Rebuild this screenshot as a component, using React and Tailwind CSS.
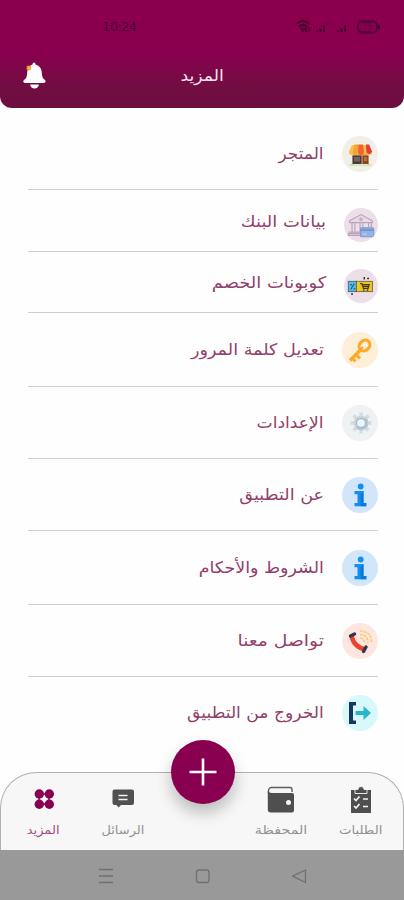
import React from 'react';

const StoreIcon = () => (
  <svg viewBox="0 0 36 36" className="w-full h-full">
    <rect x="10.500" y="17" width="16" height="11" fill="#e9a45c" />
    <rect x="10.500" y="19.500" width="9" height="8.500" fill="#4b3a3c" />
    <rect x="12" y="21" width="6" height="4.500" fill="#6f6467" />
    <rect x="20.500" y="19.500" width="6" height="8.500" fill="#85492a" />
    <rect x="22" y="21" width="3" height="4" fill="#b4703f" />
    <path d="M10 9h17l3 6.500a3 3 0 0 1-6 1 3 3 0 0 1-5.500 0 3 3 0 0 1-5.500 0 3 3 0 0 1-6-1z" fill="#fbc04b" />
    <path d="M12.500 8.500h4l-.5 7a3 3 0 0 1-5.500 1.500z" fill="#f8a03b" />
    <path d="M16.500 8.500h4.500l1 7.500a3 3 0 0 1-6 0z" fill="#f0642f" />
    <path d="M24 8.500h3l3 7a3 3 0 0 1-5.500 1z" fill="#e23c3c" />
    <path d="M7 29.500q3-2.500 5-.8h13q2-1.800 5 .8z" fill="#b7dd79" />
  </svg>
);

const BankIcon = () => (
  <svg viewBox="0 0 36 36" className="w-full h-full" fill="none" stroke="#b7a3ba" strokeWidth="1.200">
    <path d="M6 13.500 18 7l12 6.500v2H6z" fill="#ead9e5" />
    <path d="M8.500 16v9M11.500 16v9M17 16v9M20 16v9M26 16v4M29 16v4" />
    <path d="M5 25.500h14M4 29h15v-2H5z" fill="#e2cbdc" />
    <circle cx="18" cy="12" r="1.300" />
    <rect x="17.500" y="21" width="14" height="9.500" rx="1" fill="#94b4e6" stroke="#7e9dd6" />
    <path d="M17.500 23.500h14" stroke="#7592c9" strokeWidth="1.800" />
    <path d="M20 27.500h4" stroke="#c5d8f5" />
  </svg>
);

const CouponIcon = () => (
  <svg viewBox="0 0 36 36" className="w-full h-full">
    <rect x="4.500" y="13" width="9" height="11" fill="#57bce9" stroke="#30556b" strokeWidth=".8" />
    <rect x="13" y="13" width="17" height="11" fill="#efc719" stroke="#57512f" strokeWidth=".8" />
    <path d="m7 21.500 4-6M6.500 16.500h2M10 21h2" stroke="#276388" strokeWidth="1.300" />
    <path d="M17 15.500h2l1.500 5h5l1.200-4H19.500M20 18.500h6" fill="none" stroke="#463b25" strokeWidth="1.300" />
    <circle cx="21" cy="22.300" r=".9" fill="#463b25" />
    <circle cx="25" cy="22.300" r=".9" fill="#463b25" />
    <path d="M15 13v11" stroke="#f7e48f" strokeWidth=".6" strokeDasharray="1 1" />
    <path d="M21.500 8.500v2.500M24.500 10h2M8.500 25.500v2" stroke="#2f2a31" strokeWidth="1.500" />
  </svg>
);

const KeyIcon = () => (
  <svg viewBox="0 0 36 36" className="w-full h-full" fill="none" stroke="#fbab27">
    <ellipse cx="22.500" cy="13.500" rx="5.800" ry="4.800" transform="rotate(-45 22.500 13.500)" strokeWidth="3.200" />
    <path d="M18.500 18 8 28.500" strokeWidth="3.600" />
    <path d="m14 22.500 4 4M10 26l3.500 3.500" strokeWidth="3" />
    <path d="m19 17 2-2" stroke="#f18f1c" strokeWidth="1.500" />
  </svg>
);

const GearIcon = () => (
  <svg viewBox="0 0 36 36" className="w-full h-full">
    <g transform="translate(19 18)">
      <g stroke="#d3dce2" strokeWidth="3.500">
        <path d="M0-10.500v21M-10.500 0h21" />
        <path d="m-7.500-7.500 15 15M7.500-7.500l-15 15" />
      </g>
      <circle r="7.300" fill="#c9d5dc" />
      <path d="M5.200-5.200A7.300 7.300 0 0 1-5.200 5.200z" fill="#b8c6d0" />
      <circle r="4.500" fill="#edf6fc" stroke="#a3bac8" strokeWidth="1.300" />
    </g>
  </svg>
);

const InfoIcon = () => (
  <svg viewBox="0 0 36 36" className="w-full h-full" fill="#168df0">
    <circle cx="18.700" cy="9.500" r="2.900" />
    <path d="M12.500 14h9v12h2.800v3.200H12.500V26h3v-8.700h-3z" />
    <path d="M18.500 17v12.200h5.800V26h-2.800V14z" fill="#0b78df" />
  </svg>
);

const PhoneIcon = () => (
  <svg viewBox="0 0 36 36" className="w-full h-full" fill="none">
    <path d="M9.500 12.500q2 11.500 14 14" stroke="#ed432b" strokeWidth="4.500" />
    <path d="M8.500 13 12.500 11M21.500 28.500l2.500-4.500" stroke="#33394c" strokeWidth="3.400" strokeLinecap="round" />
    <path d="M18 15q4 0 4.500 4.500M18 11.500q7.500 0 8 8M18 8q11 0 11.500 11" stroke="#f6cf72" strokeWidth="1.600" strokeDasharray="3 .8" />
  </svg>
);

const ExitIcon = () => (
  <svg viewBox="0 0 36 36" className="w-full h-full">
    <path d="M14 7H7v22h7v-3.500h-3v-15h3z" fill="#153763" />
    <path d="M13.500 16h8v-5l7.500 7-7.500 7v-5h-8z" fill="#27b9cb" />
  </svg>
);

// Rows are not equally tall, so each one carries its own height and label width.
const items = [
  { label: 'المتجر', icon: StoreIcon, row: 'h-[72px]', badge: 'w-9 h-9 bg-[#f2efe8]', text: 'scale-x-[1.06]' },
  { label: 'بيانات البنك', icon: BankIcon, row: 'h-[62px]', badge: 'w-[34px] h-[34px] bg-[#eddfe9] mt-2', text: 'mt-0.5 scale-x-[1.12]' },
  { label: 'كوبونات الخصم', icon: CouponIcon, row: 'h-[61px]', badge: 'w-[34px] h-[34px] bg-[#eddfe9] mt-2', text: 'mt-0.5 scale-x-[1.12]' },
  { label: 'تعديل كلمة المرور', icon: KeyIcon, row: 'h-[74px]', badge: 'w-9 h-9 bg-[#ffeed8]', text: 'scale-x-[1.1]' },
  { label: 'الإعدادات', icon: GearIcon, row: 'h-[72px]', badge: 'w-9 h-9 bg-[#eef2f3]', text: 'scale-x-[1.07]' },
  { label: 'عن التطبيق', icon: InfoIcon, row: 'h-[72px]', badge: 'w-9 h-9 bg-[#d2e6fb]', text: 'scale-x-[1.1]' },
  { label: 'الشروط والأحكام', icon: InfoIcon, row: 'h-[74px]', badge: 'w-9 h-9 bg-[#d2e6fb]', text: 'scale-x-[1.09]' },
  { label: 'تواصل معنا', icon: PhoneIcon, row: 'h-[72px]', badge: 'w-9 h-9 bg-[#ffe6e1]', text: 'scale-x-[1.17]' },
  { label: 'الخروج من التطبيق', icon: ExitIcon, row: 'h-[72px]', badge: 'w-9 h-9 bg-[#d9f8fb]', text: 'scale-x-[1.07]' },
];

const ListIcon = () => (
  <svg viewBox="0 0 28 28" className="w-7 h-7">
    <path d="M4 4h20v23H4z" fill="#4f4f4f" />
    <path d="M8 3.500h3a3 3 0 0 1 6 0h3v4H8z" fill="#4f4f4f" stroke="#f5f5f5" strokeWidth=".9" />
    <path d="m7 12.500 2 2 3.500-4M7 20l2 2 3.500-4M16 13h5M16 20.500h5" fill="none" stroke="#f5f5f5" strokeWidth="1.700" />
  </svg>
);

const WalletIcon = () => (
  <svg viewBox="0 0 28 28" className="w-7 h-7">
    <path d="M1.500 8V4.500a3 3 0 0 1 3-3h18.500a2 2 0 0 1 2 2V6" fill="none" stroke="#5b5b5b" strokeWidth="1.400" />
    <path d="M.8 5q1.500 2 4 2H25a2 2 0 0 1 2 2v15.500a2 2 0 0 1-2 2H3.800a3 3 0 0 1-3-3z" fill="#4f4f4f" />
    <circle cx="21.500" cy="16.500" r="2.500" fill="#f7f7f7" />
  </svg>
);

const MessageIcon = () => (
  <svg viewBox="0 0 28 28" className="w-7 h-7">
    <path d="M5.500 3.500h17.500a2 2 0 0 1 2 2V17a2 2 0 0 1-2 2H12l-2.500 2.500L7.500 19h-2a2 2 0 0 1-2-2V5.500a2 2 0 0 1 2-2z" fill="#515151" />
    <path d="M9.500 9.500h9M9.500 13.500h9" stroke="#f5f5f5" strokeWidth="1.500" />
  </svg>
);

const MoreIcon = () => (
  <svg viewBox="0 0 28 28" className="w-7 h-7" fill="#8a0051">
    <path d="M9 8h10v10H9z" fill="none" stroke="#8a0051" strokeWidth="1.500" />
    <circle cx="9.300" cy="8" r="4.700" />
    <circle cx="19.300" cy="8" r="4.700" />
    <circle cx="9.300" cy="18.200" r="4.700" />
    <circle cx="19.300" cy="18.200" r="4.700" />
  </svg>
);

function StatusIcons() {
  return (
    <svg viewBox="0 0 86 16" className="w-[86px] h-4" fill="none" stroke="#4c002f">
      <path d="M1 4.500q6-5 12 0M3 7.500q4-3 8 0" strokeWidth="2.200" />
      <path d="m7 12-2-2.500h4zM10 8v5M13 13V8" strokeWidth="1.500" />
      <path d="M21 13v-2M24.500 13V9.500M28 13V6M42 13v-2M45.500 13V9.500M49 13V6" strokeWidth="2" />
      <path d="M30 5h2" strokeWidth="1" />
      <rect x="62" y="2.500" width="19" height="11" rx="4" strokeWidth="1.800" />
      <path d="M83 6v4" strokeWidth="2" />
      <text x="66" y="11" fontSize="8" fill="#63063f" stroke="none">39</text>
    </svg>
  );
}

function Header() {
  return (
    <header className="h-[108px] rounded-b-xl bg-[linear-gradient(to_bottom,#8a004f_0%,#8a004f_48%,#720d42_80%,#6c0e40_100%)]">
      <div className="flex h-[54px] items-center justify-between pl-[102px] pr-[22px]">
        <span className="text-[13px] leading-4 text-[#4c002f] tracking-[-0.6px]">10:24</span>
        <StatusIcons />
      </div>
      <div className="grid h-[43px] grid-cols-[68px_1fr_68px] items-center">
        <svg viewBox="0 0 28 32" className="w-7 h-8 ml-5 -mt-0.5" fill="#fff">
          <path d="M14 3.500q1.500 0 1.500 2Q22 7 22 16q0 3 3 5 1.500 2-1 3H5q-3-1-1-3 3-2 3-5 0-9 5.500-10.500 0-2 1.500-2z" />
          <path d="M10 25.500h9q-1 4-4.500 4t-4.500-4z" />
          <circle cx="8.800" cy="9" r="2.400" fill="#ef9a25" />
          <circle cx="9" cy="9.200" r=".9" fill="#f6ca78" />
        </svg>
        <h1 className="justify-self-center text-base leading-5 text-[#f3e2ec]">
          <span className="inline-block scale-x-[1.08]">المزيد</span>
        </h1>
      </div>
    </header>
  );
}

function Tab({ icon: Icon, label, className, text }) {
  return (
    <button className={`flex w-[79px] flex-col items-center pt-[13px] ${className}`}>
      <Icon />
      <span className={`mt-2 inline-block whitespace-nowrap text-[12px] leading-4 ${text}`}>{label}</span>
    </button>
  );
}

function BottomBar() {
  return (
    <nav dir="rtl" className="relative flex h-[78px] justify-between rounded-t-[36px] border border-b-0 border-[#b0b0b0] bg-[#f7f7f7] px-[3px]">
      <Tab icon={ListIcon} label="الطلبات" className="text-[#929292]" text="scale-x-[1.1]" />
      <Tab icon={WalletIcon} label="المحفظة" className="text-[#929292]" text="scale-x-[1.19]" />
      <div className="w-[79px]" />
      <Tab icon={MessageIcon} label="الرسائل" className="text-[#929292]" text="scale-x-[1.08]" />
      <Tab icon={MoreIcon} label="المزيد" className="text-[#a94a80]" text="scale-x-[1.09]" />
      <button className="absolute -top-[33px] left-[170px] flex h-16 w-16 items-center justify-center rounded-full bg-[#8a0051] shadow-[0_9px_16px_rgba(0,0,0,0.24)]">
        <svg viewBox="0 0 28 28" className="w-7 h-7" stroke="#fff" strokeWidth="2.600">
          <path d="M14 .5v27M.5 14h27" />
        </svg>
      </button>
    </nav>
  );
}

export default function App() {
  return (
    <div className="flex h-[900px] w-[404px] flex-col overflow-hidden bg-[#fefefe] font-['DejaVu_Sans',sans-serif]">
      <Header />
      <main dir="rtl" className="flex-1 pt-[10px] pl-7 pr-[26px]">
        {items.map(({ label, icon: Icon, row, badge, text }, i) => (
          <div key={label} className={`flex items-center ${row} ${i < items.length - 1 ? 'border-b border-[#cfcfcf]' : ''}`}>
            <div className={`shrink-0 overflow-hidden rounded-full ${badge}`}>
              <Icon />
            </div>
            <span className={`mr-[18px] origin-right whitespace-nowrap text-base leading-6 text-[#913e6a] ${text}`}>{label}</span>
          </div>
        ))}
      </main>
      <BottomBar />
      <div className="h-[50px] bg-[#999999]">
        <svg viewBox="0 0 404 50" className="w-full h-full" fill="none" stroke="#707070" strokeWidth="1.300">
          <path d="M99 19.500h14M99 26h14M99 32.500h14" />
          <rect x="196.500" y="20" width="12.500" height="12.500" rx="2.500" />
          <path d="M305.500 20v12.500l-13-6.300z" strokeLinejoin="round" />
        </svg>
      </div>
    </div>
  );
}
